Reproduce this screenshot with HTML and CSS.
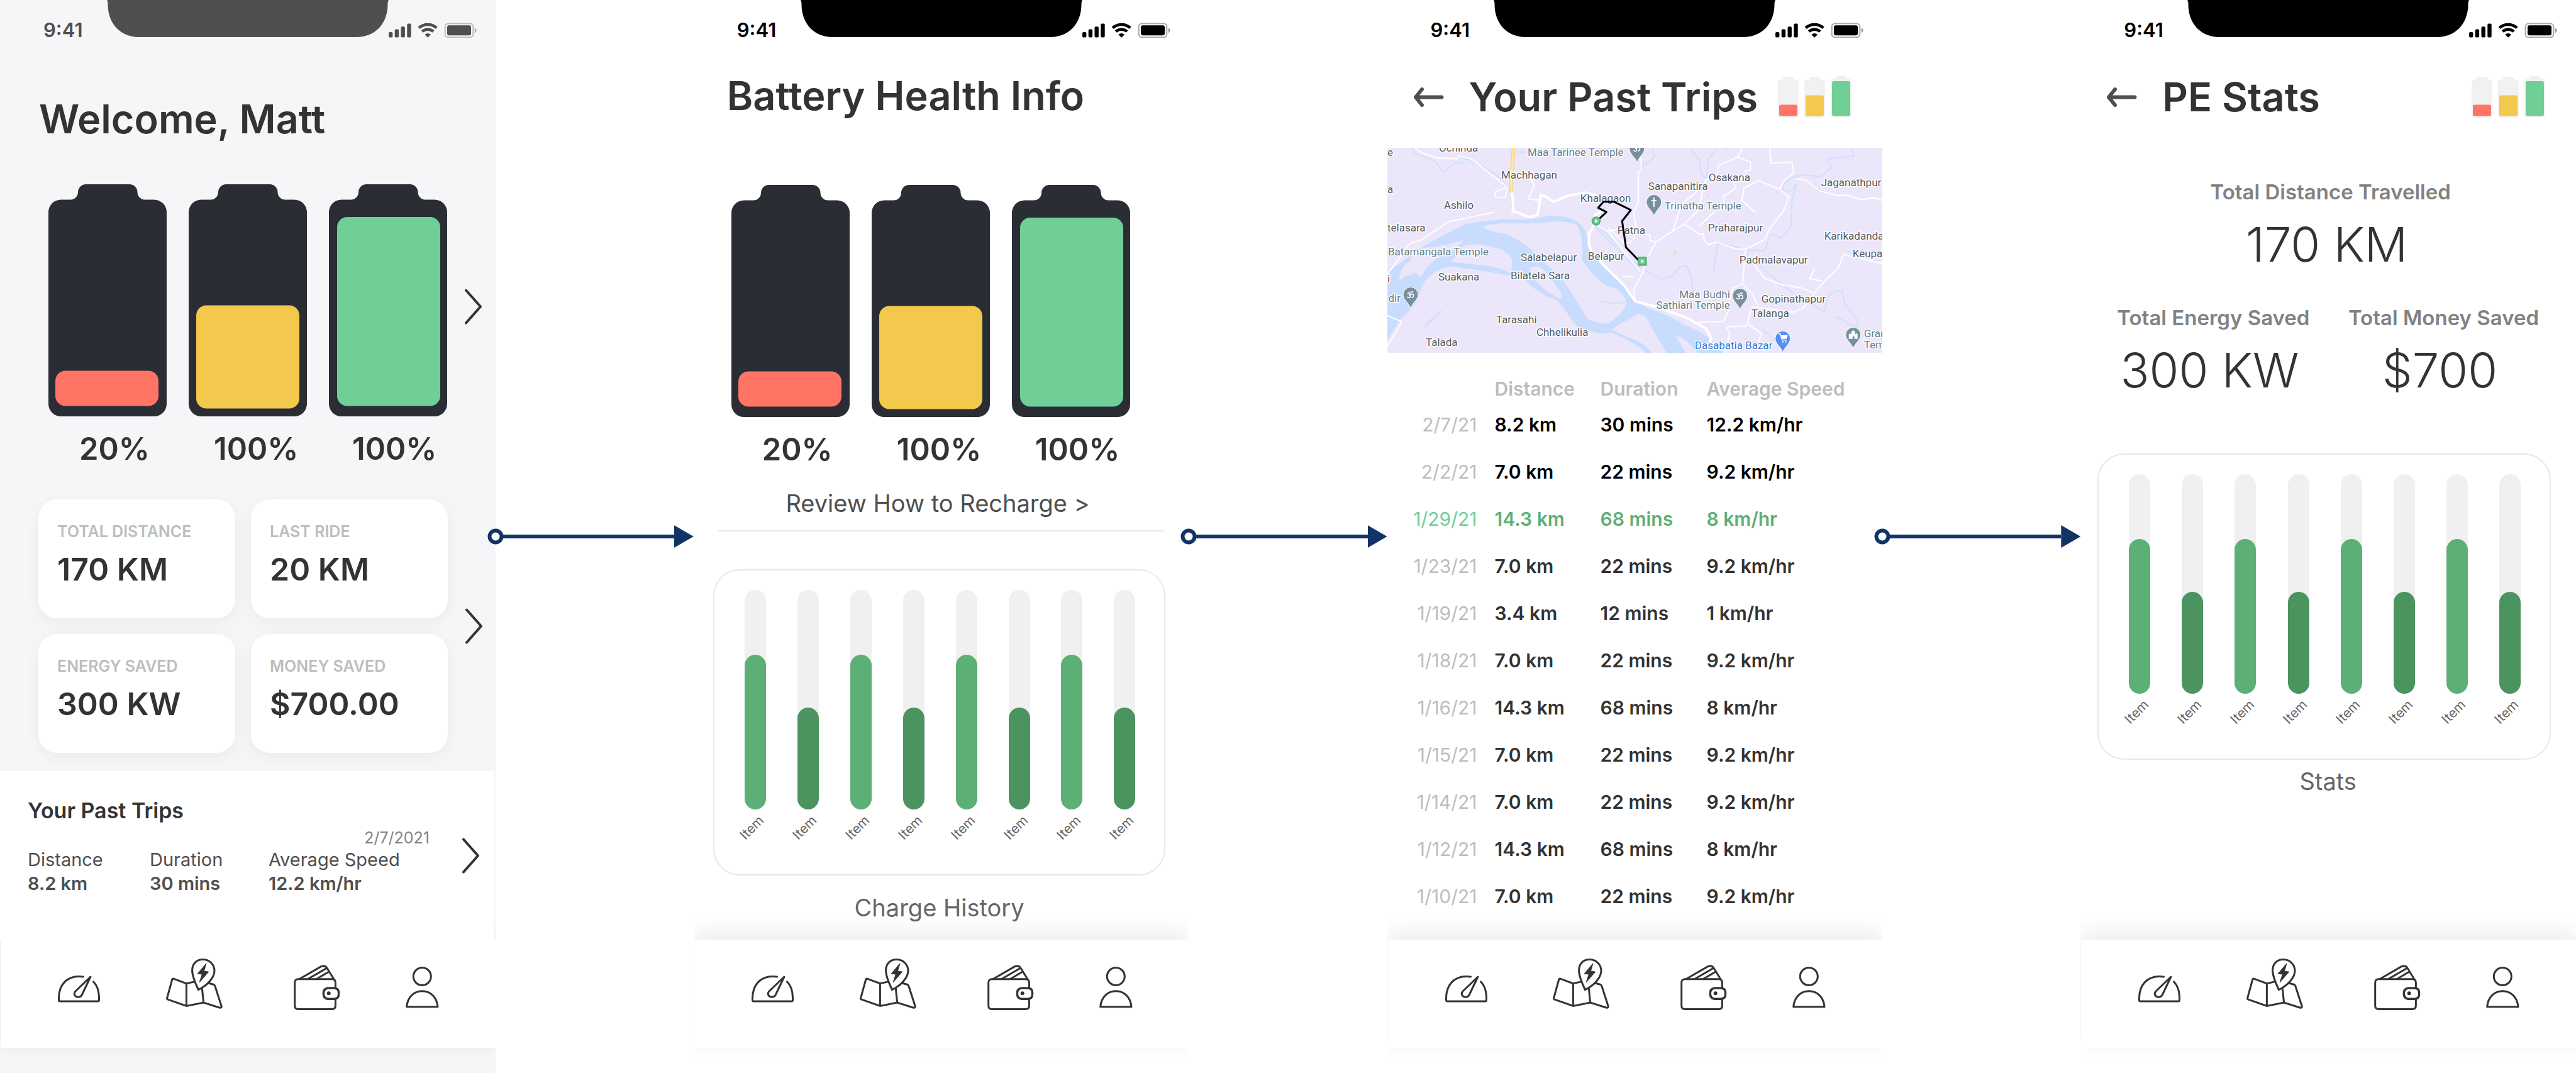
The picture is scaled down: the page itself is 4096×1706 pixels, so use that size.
FILE: index.html
```html
<!DOCTYPE html>
<html lang="en">
<head>
<meta charset="utf-8">
<meta name="viewport" content="width=device-width, initial-scale=1">
<title>Battery app flow</title>
<link rel="stylesheet" href="styles.css">
</head>
<body>
<svg class="defs" aria-hidden="true">
  <symbol id="notch" viewBox="0 0 448 59">
    <path d="M0 0Q1.500 2 1.500 7C1.500 38 22 59 51 59H397C426 59 446.500 38 446.500 7Q446.500 2 448 0Z" fill="currentColor"/>
  </symbol>
  <symbol id="signals" viewBox="0 0 140 24">
    <g fill="currentColor">
      <rect x="0" y="15" width="6.400" height="8.500" rx="2"/>
      <rect x="9.700" y="10.600" width="6.400" height="12.900" rx="2"/>
      <rect x="19.500" y="6.200" width="6.400" height="17.300" rx="2"/>
      <rect x="29.300" y="1.400" width="6.400" height="22.100" rx="2"/>
      <path d="M62.200 23.800L57.400 19Q62.200 15 67 19Z"/>
      <rect x="93" y="4.300" width="38" height="16" rx="3"/>
    </g>
    <path d="M48.200 8.400A21 21 0 0 1 76.200 8.400M53.300 14.100A13.300 13.300 0 0 1 71.100 14.100" fill="none" stroke="currentColor" stroke-width="4.600"/>
    <rect x="89.700" y="1.400" width="44.600" height="21.800" rx="5" fill="none" stroke="currentColor" stroke-opacity=".35" stroke-width="2"/>
    <path d="M136.600 8.200Q139.600 9.500 139.600 12.300T136.600 16.400Z" fill="currentColor" opacity=".4"/>
  </symbol>
  <symbol id="cell" viewBox="0 0 188 369">
    <path d="M20 24.500H35A12 12 0 0 0 47 12.500A12.500 12.500 0 0 1 59.500 0H129A12.500 12.500 0 0 1 141.500 12.500A12 12 0 0 0 153.500 24.500H168A20 20 0 0 1 188 44.500V349A20 20 0 0 1 168 369H20A20 20 0 0 1 0 349V44.500A20 20 0 0 1 20 24.500Z" fill="#2b2d34"/>
  </symbol>
  <symbol id="minis" viewBox="0 0 118 66">
    <g fill="#f1f1f1">
      <path id="mini" d="M4 5.500H7Q8 5.500 8 4V3Q8 1 10 1H23Q25 1 25 3V4Q25 5.500 26 5.500H29Q33 5.500 33 9.500V62Q33 66 29 66H4Q0 66 0 62V9.500Q0 5.500 4 5.500Z"/>
      <use href="#mini" x="42"/>
      <use href="#mini" x="84" y="-1"/>
    </g>
    <rect x="2" y="45.500" width="29" height="18" rx="3" fill="#ff7465"/>
    <rect x="44" y="30.500" width="29" height="33" rx="3" fill="#f2c94c"/>
    <rect x="86" y="8" width="29" height="55.500" rx="3" fill="#6fcf97"/>
  </symbol>
  <symbol id="chevron" viewBox="0 0 28 57">
    <path d="M2 2.500L25 28.500L2 54.500" fill="none" stroke="#333" stroke-width="4" stroke-linecap="round" stroke-linejoin="round"/>
  </symbol>
  <symbol id="back" viewBox="0 0 48 31">
    <path d="M3 15.500H44.500M13 3L3 15.500L13 28" fill="none" stroke="#4f4f4f" stroke-width="6" stroke-linecap="round" stroke-linejoin="round"/>
  </symbol>
  <symbol id="gauge" viewBox="0 0 67 84">
    <g transform="translate(0 28)" fill="none" stroke="#333" stroke-width="3" stroke-linecap="round" stroke-linejoin="round">
      <path d="M40.500 2C37 1.500 35 1.500 33.500 1.500C14 1.500 1.500 15 1.500 36V39Q1.500 41 3.500 41H63.500Q65.500 41 65.500 39C66 26 63.500 17 56.500 9.800"/>
      <path d="M52 2L28.500 24.500C24 29 27 34.500 33 34.300C37 34 38.500 31 39.500 28Z"/>
    </g>
  </symbol>
  <symbol id="map-pin" viewBox="0 0 90 84">
    <g transform="translate(0 1)" fill="none" stroke="#333" stroke-width="3">
      <path d="M45 36.900L32.400 39.600L12 32.200Q10.200 31.600 9.700 33.500L1.700 62.500Q1.200 64.600 3 65.200L32.400 75.400L59.600 70L85.500 78.300Q89 78.600 88 75.200L77.800 43.500Q77.200 41.800 75.500 41.300L66 38.800M32.400 39.600V75.400M57.300 47L59.600 70"/>
      <path d="M51.400 49.500C45 36 41.600 27 41.600 19C41.600 8 49 1.600 58.500 1.600C69.500 1.600 77 10 77 19.500C77 30 66 41.500 57 46.500Q54 48.400 51.400 49.500Z"/>
      <path d="M63.900 7.800L60.400 20.300L67.700 21.100L53.200 37.700L57.400 25L50.200 24.200Z" fill="#333" stroke-width="1" stroke-linejoin="round"/>
    </g>
  </symbol>
  <symbol id="wallet" viewBox="0 0 74 84">
    <g transform="translate(0 11)" fill="none" stroke="#333" stroke-width="3">
      <path d="M66.400 37V28.300Q66.400 22.800 61 22.800H7Q1.700 22.800 1.700 28.300V65Q1.700 70.500 7 70.500H61Q66.400 70.500 66.400 65V54.500"/>
      <path d="M54 36.900H64Q71.500 37.300 71.500 43.500V47.600Q71.500 54 64 54.300H54Q47.300 53.300 47.300 45.600Q47.300 38 54 36.900Z" stroke-width="3.500"/>
      <path d="M9.200 22.500L43.500 2.700Q50 .2 53.200 5.500L64 23M22.700 22.500L52.900 5M36.400 22.500L56 11"/>
      <circle cx="55.700" cy="45.300" r="3" fill="#333" stroke="none"/>
    </g>
  </symbol>
  <symbol id="person" viewBox="0 0 53 84">
    <g transform="translate(0 14)" fill="none" stroke="#333" stroke-width="3" stroke-linejoin="round">
      <circle cx="26.300" cy="15.500" r="14"/>
      <path d="M1.700 63.800C3 48 13.500 38.800 26.300 38.800S49.700 48 51 63.800Z"/>
    </g>
  </symbol>
  <symbol id="pin" viewBox="-14 -36 28 38" overflow="visible">
    <path d="M0 0C-2 -9 -12 -14 -12 -22.500A12 12 0 0 1 12 -22.500C12 -14 2 -9 0 0Z" stroke="#fff" stroke-width="1"/>
  </symbol>
  <symbol id="om" viewBox="-7 -7 14 14" overflow="visible">
    <path d="M-5 -2Q-2 -5 -1 -2.500Q-1 0 -3 0Q0 0 -.5 3Q-2 6 -5.500 3M-1 0Q3 -3 4.500 0Q5 4 1.500 4M0 -5.500Q2 -3.500 4 -5.500" fill="none" stroke="#fff" stroke-width="1.600"/>
  </symbol>
</svg>

<main class="board">

  <section class="phone phone-home">
    <header class="status status-dim">
      <time class="clock">9:41</time>
      <svg class="notch"><use href="#notch"/></svg>
      <svg class="signals"><use href="#signals"/></svg>
    </header>
    <h1 class="title title-home">Welcome, Matt</h1>
    <div class="level-row">
      <div class="cells">
        <svg class="cell" viewBox="0 0 188 369"><use href="#cell"/><rect x="11" y="296.500" width="164" height="56" rx="16" fill="#ff7465"/></svg>
        <svg class="cell" viewBox="0 0 188 369"><use href="#cell"/><rect x="12" y="192.500" width="164" height="164" rx="16" fill="#f2c94c"/></svg>
        <svg class="cell" viewBox="0 0 188 369"><use href="#cell"/><rect x="13" y="52" width="164" height="300.500" rx="16" fill="#6fcf97"/></svg>
      </div>
      <a class="more more-cells" href="#battery" aria-label="Battery health"><svg class="chevron"><use href="#chevron"/></svg></a>
    </div>
    <div class="percents percents-home"><span>20%</span><span>100%</span><span>100%</span></div>
    <div class="cards-row">
      <div class="cards">
        <article class="card"><h2 class="card-label">TOTAL DISTANCE</h2><p class="card-value">170 KM</p></article>
        <article class="card"><h2 class="card-label">LAST RIDE</h2><p class="card-value">20 KM</p></article>
        <article class="card"><h2 class="card-label">ENERGY SAVED</h2><p class="card-value">300 KW</p></article>
        <article class="card"><h2 class="card-label">MONEY SAVED</h2><p class="card-value">$700.00</p></article>
      </div>
      <a class="more" href="#stats" aria-label="Stats"><svg class="chevron"><use href="#chevron"/></svg></a>
    </div>
    <section class="last-trip">
      <div class="last-trip-body">
        <h2 class="last-trip-title">Your Past Trips</h2>
        <time class="last-trip-date">2/7/2021</time>
        <dl class="facts">
          <div><dt>Distance</dt><dd>8.2 km</dd></div>
          <div><dt>Duration</dt><dd>30 mins</dd></div>
          <div><dt>Average Speed</dt><dd>12.2 km/hr</dd></div>
        </dl>
      </div>
      <a class="more" href="#trips" aria-label="Past trips"><svg class="chevron"><use href="#chevron"/></svg></a>
    </section>
    <nav class="tabs">
      <a href="#home" aria-label="Dashboard"><svg class="tab-gauge"><use href="#gauge"/></svg></a>
      <a href="#map" aria-label="Charging map"><svg class="tab-map"><use href="#map-pin"/></svg></a>
      <a href="#wallet-tab" aria-label="Wallet"><svg class="tab-wallet"><use href="#wallet"/></svg></a>
      <a href="#profile" aria-label="Profile"><svg class="tab-person"><use href="#person"/></svg></a>
    </nav>
  </section>

  <div class="link"><svg class="link-dot" viewBox="0 0 26 26"><circle cx="13" cy="13" r="9.500"/></svg><span class="link-line"></span><span class="link-head"></span></div>

  <section class="phone" id="battery">
    <header class="status">
      <time class="clock">9:41</time>
      <svg class="notch"><use href="#notch"/></svg>
      <svg class="signals"><use href="#signals"/></svg>
    </header>
    <h1 class="title title-battery">Battery Health Info</h1>
    <div class="level-row level-row-battery">
      <div class="cells">
        <svg class="cell" viewBox="0 0 188 369"><use href="#cell"/><rect x="11" y="296.500" width="164" height="56" rx="16" fill="#ff7465"/></svg>
        <svg class="cell" viewBox="0 0 188 369"><use href="#cell"/><rect x="12" y="192.500" width="164" height="164" rx="16" fill="#f2c94c"/></svg>
        <svg class="cell" viewBox="0 0 188 369"><use href="#cell"/><rect x="13" y="52" width="164" height="300.500" rx="16" fill="#6fcf97"/></svg>
      </div>
    </div>
    <div class="percents percents-battery"><span>20%</span><span>100%</span><span>100%</span></div>
    <a class="recharge" href="#recharge">Review How to Recharge &gt;</a>
    <hr class="rule">
    <figure class="figure">
      <div class="chart">
        <div class="bar"><div class="track"><div class="fill" style="height:246px"></div></div><span class="tick">Item</span></div>
        <div class="bar"><div class="track"><div class="fill fill-dark" style="height:162px"></div></div><span class="tick">Item</span></div>
        <div class="bar"><div class="track"><div class="fill" style="height:246px"></div></div><span class="tick">Item</span></div>
        <div class="bar"><div class="track"><div class="fill fill-dark" style="height:162px"></div></div><span class="tick">Item</span></div>
        <div class="bar"><div class="track"><div class="fill" style="height:246px"></div></div><span class="tick">Item</span></div>
        <div class="bar"><div class="track"><div class="fill fill-dark" style="height:162px"></div></div><span class="tick">Item</span></div>
        <div class="bar"><div class="track"><div class="fill" style="height:246px"></div></div><span class="tick">Item</span></div>
        <div class="bar"><div class="track"><div class="fill fill-dark" style="height:162px"></div></div><span class="tick">Item</span></div>
      </div>
      <figcaption class="caption caption-history">Charge History</figcaption>
    </figure>
    <nav class="tabs">
      <a href="#home" aria-label="Dashboard"><svg class="tab-gauge"><use href="#gauge"/></svg></a>
      <a href="#map" aria-label="Charging map"><svg class="tab-map"><use href="#map-pin"/></svg></a>
      <a href="#wallet-tab" aria-label="Wallet"><svg class="tab-wallet"><use href="#wallet"/></svg></a>
      <a href="#profile" aria-label="Profile"><svg class="tab-person"><use href="#person"/></svg></a>
    </nav>
  </section>

  <div class="link"><svg class="link-dot" viewBox="0 0 26 26"><circle cx="13" cy="13" r="9.500"/></svg><span class="link-line"></span><span class="link-head"></span></div>

  <section class="phone" id="trips">
    <header class="status">
      <time class="clock">9:41</time>
      <svg class="notch"><use href="#notch"/></svg>
      <svg class="signals"><use href="#signals"/></svg>
    </header>
    <div class="topbar">
      <button class="back" type="button" aria-label="Back"><svg class="back-icon"><use href="#back"/></svg></button>
      <h1 class="title">Your Past Trips</h1>
      <svg class="minis"><use href="#minis"/></svg>
    </div>
    <svg class="map" viewBox="0 0 788 326" role="img" aria-label="Map of the selected trip">
      <rect width="788" height="326" fill="#ebe6fa"/>
      <g class="terrain" transform="translate(-5.300 -4.300) scale(.50905 .21434)">
        <path fill="#c8dcfd" d="M0 960L60 860L130 740L200 650L245 595Q300 560 390 550Q470 560 500 530Q530 515 575 540Q610 560 625 620Q640 700 650 780Q690 920 750 1050Q775 1160 830 1215Q900 1270 935 1330Q1010 1400 1022 1460L1065 1550H985L960 1490Q940 1430 912 1415Q925 1480 945 1550H885Q860 1450 835 1350Q820 1250 795 1252Q765 1290 712 1365Q730 1400 780 1440Q820 1480 838 1550H820Q790 1470 715 1395Q690 1400 660 1390Q610 1370 590 1310Q560 1200 540 1150Q490 1120 440 1000Q420 960 370 960Q300 925 200 900Q160 930 130 1000Q110 1080 105 1140Q90 1220 55 1280L0 1480Z"/>
        <g fill="#ebe6fa">
          <path d="M308 605Q340 578 400 578Q470 590 540 565Q590 570 606 600Q625 700 618 850Q650 970 700 1050Q745 1060 758 1170Q750 1250 700 1325Q670 1330 635 1290Q600 1150 575 1060Q550 950 485 850Q460 740 380 660Q320 640 308 605Z"/>
          <path d="M48 1010Q45 920 80 860Q90 800 130 760Q200 745 252 700Q235 750 200 800Q150 850 130 920L115 985Q90 920 92 960Q65 960 48 1010Z"/>
          <path d="M245 750Q290 720 330 750Q390 780 400 850Q400 920 395 945Q340 890 290 888Q240 870 205 868Q240 800 245 750Z"/>
          <path d="M455 910Q485 880 510 950Q530 1020 552 1090Q560 1130 548 1140Q500 1080 480 1020Q460 970 455 910Z"/>
        </g>
        <g fill="none" stroke="#cfe0fb" stroke-width="2">
          <path d="M90 20L95 60L160 120L180 190H195L220 130L250 132M230 80L290 130L350 220L385 300M955 20L985 110L990 200L1005 250L1015 100L1040 20M1460 20L1470 80L1385 105L1398 165L1365 235L1310 220L1275 240L1250 290L1245 340L1270 340L1290 290L1275 400L1273 600L1240 690L1210 655L1188 785L1140 780L1043 725L1030 940M1130 800L1200 950L1280 1100L1375 1235L1390 1110L1415 1080L1432 1090L1440 1180L1480 1300L1475 1350L1410 1270M840 20L845 90L810 150L805 190M810 920L865 995L900 975L925 905L945 895L960 980L968 1110M675 1158L720 1178L755 1165M125 1365L178 1230L125 1340M1185 1365L1220 1450"/>
          <path d="M658 605L795 925M668 600L802 915M410 50L510 55"/>
        </g>
        <g fill="none" stroke="#fff" stroke-width="2">
          <path d="M95 20L120 60L165 95L228 102L232 80L270 100L290 130L340 230L385 310L345 350L348 385L378 390L385 320M480 20L470 50M455 230L470 300L450 400L485 410M400 510L402 440M345 495L340 500L200 570L120 700L80 730L60 800L10 960M800 20L805 180L795 200L795 420L780 500L788 620L780 700L755 740L700 610M832 665L790 660M700 640L735 625M830 660L832 710L850 720L900 640L935 590L980 490L985 450L1005 260L1040 230L1045 150L1105 90L1120 20M1105 90L1145 125V185L1130 190V245L1090 270L1100 320L1060 380L1062 430L985 600M940 590L985 660H998L1000 700L1012 740L1040 720L1100 770L1130 772L1190 700L1205 620L1250 480L1265 385L1235 325L1170 265L1125 320L1118 410L1160 500M1235 325L1255 250L1280 210L1275 125L1210 135L1205 20M1285 250L1320 262L1360 340L1420 375L1450 370L1490 405L1530 390L1558 410M1130 770L1120 1030L1150 1100L1170 1200M1120 1030L1090 1060L1080 1150L1075 1240L1060 1310L985 1315M1140 820L1160 900L1190 990L1250 1040L1305 1060L1345 1100L1380 1000L1420 910L1435 810L1558 880M1345 1100L1310 1210L1280 1240L1150 1200L1135 1320L1150 1350L1180 1400L1170 1450L1190 1541M1345 920L1330 990L1370 1010M850 720L820 850L810 940L780 1070L785 1150M745 970L780 980M660 590L700 640L730 730L800 935M1065 1541L1080 1400L1070 1350L1135 1340M10 1265L55 1310L35 1400L10 1490M900 650L930 440L980 340"/>
        </g>
        <path d="M400 350L405 490L455 535L480 515L490 370L500 375L530 420L575 375L630 352L660 370L690 430M685 480L660 520L655 600L640 660L640 740L650 800L690 900L750 1040L785 1160L850 1200L945 1280L1005 1360L1022 1430L1018 1470" fill="none" stroke="#fff" stroke-width="4"/>
        <path d="M405 20L396 300L398 348" fill="none" stroke="#f7d57c" stroke-width="6"/>
        <path d="M405 20L396 300L398 348" fill="none" stroke="#fde9a9" stroke-width="3"/>
        <path d="M905 775L918 798L902 822ZM1062 20L1076 45L1072 20Z" fill="#cdeccb"/>
        <path d="M688 450L694 470L684 490ZM1010 350L1014 385L1008 380ZM917 360L921 375Z" fill="#c8dcfd"/>
      </g>
      <g class="places">
        <text x="82" y="6">Ochinda</text>
        <text x="0" y="13">e</text>
        <text x="0" y="72">a</text>
        <text x="181" y="49">Machhagan</text>
        <text x="511" y="53">Osakana</text>
        <text x="690" y="61">Jaganathpur</text>
        <text x="415" y="67">Sanapanitira</text>
        <text x="307" y="86">Khalagaon</text>
        <text x="90" y="97">Ashilo</text>
        <text x="0" y="133">telasara</text>
        <text x="510" y="133">Praharajpur</text>
        <text x="366" y="137">Patna</text>
        <text x="695" y="146">Karikadanda</text>
        <text x="212" y="180">Salabelapur</text>
        <text x="319" y="178">Belapur</text>
        <text x="740" y="174">Keupada</text>
        <text x="560" y="184">Padmalavapur</text>
        <text x="81" y="211">Suakana</text>
        <text x="196" y="209">Bilatela Sara</text>
        <text x="0" y="214">i</text>
        <text x="595" y="246">Gopinathapur</text>
        <text x="579" y="269">Talanga</text>
        <text x="173" y="279">Tarasahi</text>
        <text x="237" y="299">Chhelikulia</text>
        <text x="61" y="315">Talada</text>
      </g>
      <g class="places temples">
        <text x="223" y="13">Maa Tarinee Temple</text>
        <text x="441" y="98">Trinatha Temple</text>
        <text x="1" y="171">Batamangala Temple</text>
        <text x="545" y="239" text-anchor="end">Maa Budhi</text>
        <text x="545" y="256" text-anchor="end">Sathiari Temple</text>
        <text x="21" y="245" text-anchor="end">dir</text>
        <text x="758" y="301">Gram</text>
        <text x="758" y="319">Temple</text>
      </g>
      <g class="places shops"><text x="489" y="320">Dasabatia Bazar</text></g>
      <g fill="#78909c">
        <use href="#pin" x="383" y="-12" width="28" height="38"/>
        <use href="#pin" x="410" y="73" width="28" height="38"/>
        <use href="#pin" x="23" y="220" width="28" height="38"/>
        <use href="#pin" x="547" y="222" width="28" height="38"/>
        <use href="#pin" x="727" y="284" width="28" height="38"/>
      </g>
      <use href="#pin" x="615" y="290" width="28" height="38" fill="#4f8ff7"/>
      <use href="#om" x="390" y="-6" width="14" height="14"/>
      <use href="#om" x="30" y="227" width="14" height="14"/>
      <use href="#om" x="554" y="229" width="14" height="14"/>
      <path d="M424 79V94M420 84H428" stroke="#fff" stroke-width="2"/>
      <path d="M734 304V297L736 295L738 297V293L741 290L744 293V297L746 295L748 297V304H743V300H740V304Z" fill="#fff"/>
      <path d="M622 296H625L628 306H635" fill="none" stroke="#fff" stroke-width="1.500"/>
      <path d="M626 298H637L635 304H628ZM628 308H630V310H628ZM633 308H635V310H633Z" fill="#fff"/>
      <g class="terrain" transform="translate(-5.300 -4.300) scale(.50905 .21434)">
        <path d="M672 548L695 497L669 465L686 420H718L771 482L744 564L756 759L796 856" fill="none" stroke="#000" stroke-width="3"/>
      </g>
      <circle cx="332" cy="116.500" r="6" fill="#6fcf97" stroke="#5db075" stroke-width="2.500"/>
      <circle cx="332" cy="116.500" r="2" fill="#fff"/>
      <rect x="399.500" y="174.500" width="12" height="12" fill="#6fcf97" stroke="#5db075" stroke-width="2.500"/>
      <circle cx="405.500" cy="180.500" r="2" fill="#fff"/>
    </svg>
    <table class="trips">
      <colgroup><col class="col-date"><col class="col-distance"><col class="col-duration"><col></colgroup>
      <thead><tr><td></td><th scope="col">Distance</th><th scope="col">Duration</th><th scope="col">Average Speed</th></tr></thead>
      <tbody>
        <tr class="recent"><th scope="row">2/7/21</th><td>8.2 km</td><td>30 mins</td><td>12.2 km/hr</td></tr>
        <tr class="recent"><th scope="row">2/2/21</th><td>7.0 km</td><td>22 mins</td><td>9.2 km/hr</td></tr>
        <tr class="selected"><th scope="row">1/29/21</th><td>14.3 km</td><td>68 mins</td><td>8 km/hr</td></tr>
        <tr><th scope="row">1/23/21</th><td>7.0 km</td><td>22 mins</td><td>9.2 km/hr</td></tr>
        <tr><th scope="row">1/19/21</th><td>3.4 km</td><td>12 mins</td><td>1 km/hr</td></tr>
        <tr><th scope="row">1/18/21</th><td>7.0 km</td><td>22 mins</td><td>9.2 km/hr</td></tr>
        <tr><th scope="row">1/16/21</th><td>14.3 km</td><td>68 mins</td><td>8 km/hr</td></tr>
        <tr><th scope="row">1/15/21</th><td>7.0 km</td><td>22 mins</td><td>9.2 km/hr</td></tr>
        <tr><th scope="row">1/14/21</th><td>7.0 km</td><td>22 mins</td><td>9.2 km/hr</td></tr>
        <tr><th scope="row">1/12/21</th><td>14.3 km</td><td>68 mins</td><td>8 km/hr</td></tr>
        <tr><th scope="row">1/10/21</th><td>7.0 km</td><td>22 mins</td><td>9.2 km/hr</td></tr>
      </tbody>
    </table>
    <nav class="tabs">
      <a href="#home" aria-label="Dashboard"><svg class="tab-gauge"><use href="#gauge"/></svg></a>
      <a href="#map" aria-label="Charging map"><svg class="tab-map"><use href="#map-pin"/></svg></a>
      <a href="#wallet-tab" aria-label="Wallet"><svg class="tab-wallet"><use href="#wallet"/></svg></a>
      <a href="#profile" aria-label="Profile"><svg class="tab-person"><use href="#person"/></svg></a>
    </nav>
  </section>

  <div class="link"><svg class="link-dot" viewBox="0 0 26 26"><circle cx="13" cy="13" r="9.500"/></svg><span class="link-line"></span><span class="link-head"></span></div>

  <section class="phone" id="stats">
    <header class="status">
      <time class="clock">9:41</time>
      <svg class="notch"><use href="#notch"/></svg>
      <svg class="signals"><use href="#signals"/></svg>
    </header>
    <div class="topbar">
      <button class="back" type="button" aria-label="Back"><svg class="back-icon"><use href="#back"/></svg></button>
      <h1 class="title">PE Stats</h1>
      <svg class="minis"><use href="#minis"/></svg>
    </div>
    <dl class="totals">
      <div class="total total-wide"><dt>Total Distance Travelled</dt><dd>170 KM</dd></div>
      <div class="total"><dt>Total Energy Saved</dt><dd>300 KW</dd></div>
      <div class="total"><dt>Total Money Saved</dt><dd>$700</dd></div>
    </dl>
    <figure class="figure figure-stats">
      <div class="chart">
        <div class="bar"><div class="track"><div class="fill" style="height:246px"></div></div><span class="tick">Item</span></div>
        <div class="bar"><div class="track"><div class="fill fill-dark" style="height:162px"></div></div><span class="tick">Item</span></div>
        <div class="bar"><div class="track"><div class="fill" style="height:246px"></div></div><span class="tick">Item</span></div>
        <div class="bar"><div class="track"><div class="fill fill-dark" style="height:162px"></div></div><span class="tick">Item</span></div>
        <div class="bar"><div class="track"><div class="fill" style="height:246px"></div></div><span class="tick">Item</span></div>
        <div class="bar"><div class="track"><div class="fill fill-dark" style="height:162px"></div></div><span class="tick">Item</span></div>
        <div class="bar"><div class="track"><div class="fill" style="height:246px"></div></div><span class="tick">Item</span></div>
        <div class="bar"><div class="track"><div class="fill fill-dark" style="height:162px"></div></div><span class="tick">Item</span></div>
      </div>
      <figcaption class="caption caption-stats">Stats</figcaption>
    </figure>
    <nav class="tabs">
      <a href="#home" aria-label="Dashboard"><svg class="tab-gauge"><use href="#gauge"/></svg></a>
      <a href="#map" aria-label="Charging map"><svg class="tab-map"><use href="#map-pin"/></svg></a>
      <a href="#wallet-tab" aria-label="Wallet"><svg class="tab-wallet"><use href="#wallet"/></svg></a>
      <a href="#profile" aria-label="Profile"><svg class="tab-person"><use href="#person"/></svg></a>
    </nav>
  </section>

</main>
</body>
</html>
```

FILE: styles.css
```css
* { box-sizing: border-box; }

body {
  margin: 0;
  background: #fff;
  color: #333;
  font-family: Inter, "Liberation Sans", sans-serif;
  font-optical-sizing: none;
}

h1, h2, p, dl, dt, dd, figure { margin: 0; font-weight: inherit; font-size: inherit; }
svg { display: block; flex: none; }
a { color: inherit; text-decoration: none; }
.defs { position: absolute; width: 0; height: 0; }

/* Board: four phones joined by connectors */
.board {
  display: grid;
  grid-template-columns: 5fr 2fr 5fr 2fr 5fr 2fr 5fr;
  min-height: 100vh;
}

.phone {
  display: flex;
  flex-direction: column;
  min-width: 0;
  overflow: hidden;
  background: #fff;
}
.phone-home { background: #f6f6f8; }

.link {
  position: relative;
  z-index: 2;
  display: flex;
  align-items: center;
  margin-left: -13px;
}
.link-dot { width: 26px; height: 26px; fill: #fff; stroke: #123366; stroke-width: 6px; }
.link-line { flex: 1; height: 6px; margin-left: -2px; background: #123366; }
.link-head {
  width: 31px;
  height: 36px;
  background: #123366;
  clip-path: polygon(0 0, 100% 50%, 0 100%);
}

/* Status bar */
.status {
  display: grid;
  grid-template-columns: 1fr 448px 1fr;
  height: 59px;
  color: #000;
}
.status-dim { color: #4f4f4f; }
.clock { padding: 32px 0 0 69px; font-size: 31px; line-height: 32px; font-weight: 600; }
.notch { width: 448px; height: 59px; }
.signals { width: 140px; height: 24px; margin-top: 36px; }

.title { font-size: 63px; line-height: 76px; font-weight: 600; white-space: nowrap; }
.title-home { margin: 92px 0 0 62px; }
.title-battery { margin: 55px 0 0 53px; }

/* Battery levels */
.level-row { display: flex; align-items: center; margin-top: 66px; padding-left: 77px; }
.level-row-battery { margin-top: 104px; padding-left: 60px; }
.cells { display: flex; justify-content: space-between; width: 634px; }
.cell { width: 188px; height: 369px; }
.more { display: block; margin-left: 28px; }
.more-cells { padding-top: 20px; }
.chevron { width: 28px; height: 57px; }
.percents {
  display: grid;
  grid-template-columns: 214px 220px auto;
  margin-top: 22px;
  font-size: 49px;
  line-height: 60px;
  font-weight: 600;
}
.percents-home { padding-left: 126px; }
.percents-battery { padding-left: 109px; }

/* Home cards */
.cards-row { display: flex; align-items: center; margin-top: 50px; padding-left: 61px; }
.cards { display: grid; grid-template-columns: 313px 313px; gap: 25px; }
.card {
  height: 189px;
  padding: 35px 30px 0;
  border-radius: 30px;
  background: #fff;
  box-shadow: 0 6px 26px rgba(0, 0, 0, .05);
}
.card-label { color: #bdbdbd; font-size: 25px; line-height: 32px; font-weight: 600; white-space: nowrap; }
.card-value { margin-top: 14px; font-size: 50px; line-height: 60px; font-weight: 600; white-space: nowrap; }

.last-trip {
  position: relative;
  z-index: 1;
  display: flex;
  flex: 1;
  align-items: center;
  margin: 29px 2px 0 0;
  padding-left: 44px;
  background: #fff;
}
.last-trip-body { width: 639px; padding-bottom: 28px; }
.last-trip + .tabs { margin-top: 0; }
.last-trip .more { margin-left: 52px; }
.last-trip-title { font-size: 34px; line-height: 40px; font-weight: 600; }
.last-trip-date { display: block; margin-top: 7px; color: #828282; font-size: 25px; line-height: 32px; text-align: right; }
.facts { display: grid; grid-template-columns: 194px 189px auto; color: #4f4f4f; font-size: 29px; line-height: 38px; }
.facts dd { font-weight: 600; }

/* Tab bar */
.tabs {
  display: grid;
  grid-template-columns: 172fr 203fr 178fr 143fr;
  height: 172px;
  margin: auto 0 40px 1px;
  padding: 29px 0 0 91px;
  background: #fff;
  box-shadow: 0 -10px 34px rgba(0, 0, 0, .085);
}
.tab-gauge { width: 67px; height: 84px; }
.tab-map { width: 90px; height: 84px; }
.tab-wallet { width: 74px; height: 84px; }
.tab-person { width: 53px; height: 84px; }

/* Battery health */
.recharge {
  margin-top: 31px;
  padding-right: 11px;
  color: #4f4f4f;
  font-size: 38px;
  line-height: 48px;
  text-align: center;
}
.rule { width: auto; height: 2px; margin: 19px 39px 0; border: 0; background: #e8e8e8; }
.figure { margin: 60px 37px 0 31px; }
.chart {
  display: flex;
  justify-content: space-between;
  height: 487px;
  padding: 31px 46px 0 48px;
  border: 2px solid #e8e8e8;
  border-radius: 42px;
}
.bar { display: flex; flex-direction: column; align-items: center; width: 34px; }
.track {
  display: flex;
  flex-direction: column;
  justify-content: flex-end;
  width: 34px;
  height: 349px;
  border-radius: 17px;
  background: #f0f0f0;
}
.fill { border-radius: 17px; background: #5db075; }
.fill-dark { background: #4b9460; }
.tick { margin: 17px 10px 0 0; color: #666; font-size: 21px; line-height: 24px; transform: rotate(-45deg); }
.caption { color: #666; font-size: 38px; line-height: 48px; text-align: center; }
.caption-history { margin-top: 27px; }
.caption-stats { margin-top: 10px; padding-left: 12px; }

/* Top bar with back button */
.topbar { display: flex; align-items: center; margin-top: 57px; padding: 0 48px 0 42px; }
.back { margin-right: 40px; padding: 0; border: 0; background: none; cursor: pointer; }
.back-icon { width: 48px; height: 31px; }
.minis { width: 118px; height: 66px; margin-left: auto; }

/* Past trips */
.map { width: 100%; height: auto; margin-top: 43px; }
.terrain path { vector-effect: non-scaling-stroke; stroke-linejoin: round; }
.places {
  fill: #55595e;
  stroke: #fff;
  stroke-width: 3px;
  stroke-linejoin: round;
  paint-order: stroke;
  font-family: Roboto, "Liberation Sans", sans-serif;
  font-size: 17px;
}
.temples { fill: #5f7d88; }
.shops { fill: #2f78d8; }

.trips {
  width: 100%;
  margin-top: 39px;
  border-collapse: collapse;
  table-layout: fixed;
  font-size: 30px;
  line-height: 36px;
  font-weight: 600;
  text-align: left;
  white-space: nowrap;
}
.trips th, .trips td { padding: 0; font-weight: 600; }
.col-date { width: 171px; }
.col-distance { width: 168px; }
.col-duration { width: 169px; }
.trips thead th { padding-bottom: 2px; color: #bdbdbd; }
.trips tbody tr { height: 75px; }
.trips tbody th { padding-right: 28px; color: #bdbdbd; font-weight: 400; text-align: right; }
.trips .recent { color: #000; }
.trips .selected { color: #5db075; }
.trips .selected th { color: #6fcf97; }

/* Stats */
.totals { display: grid; grid-template-columns: auto auto; justify-content: space-between; row-gap: 51px; margin-top: 93px; padding: 0 59px 0 58px; }
.total { text-align: center; white-space: nowrap; }
.total-wide { grid-column: 1 / -1; padding-left: 8px; }
.total dt { color: #828282; font-size: 33px; line-height: 40px; font-weight: 600; }
.total dd { margin-top: 17px; padding-right: 12px; font-size: 76px; line-height: 92px; font-weight: 300; }
.figure-stats { margin: 87px 40px 0 27px; }
```
